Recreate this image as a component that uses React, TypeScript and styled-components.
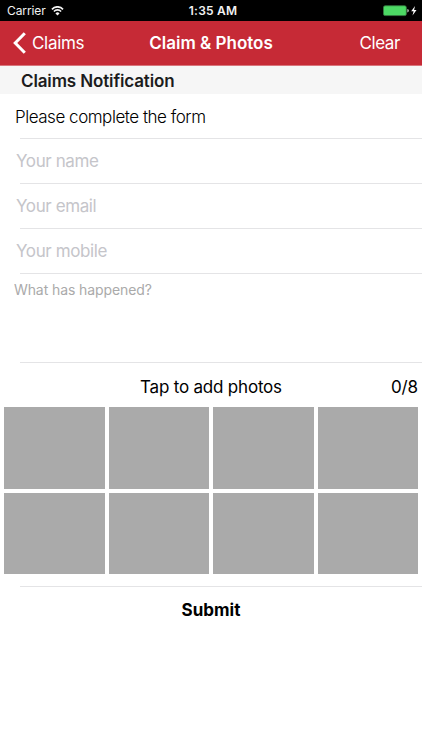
import React from "react";
import styled, { createGlobalStyle } from "styled-components";

const GlobalStyle = createGlobalStyle`
  * { box-sizing: border-box; }
  body { margin: 0; background: #fff; }
  button, input, textarea { font: inherit; color: inherit; border: 0; padding: 0; margin: 0; background: none; outline: none; border-radius: 0; }
`;

const Screen = styled.div`
  width: 422px;
  height: 750px;
  overflow: hidden;
  display: flex;
  flex-direction: column;
  background: #fff;
  color: #000;
  font-family: Inter, "Liberation Sans", sans-serif;
  font-size: 17px;
`;

const StatusBar = styled.div`
  height: 21px;
  flex: none;
  display: grid;
  grid-template-columns: 1fr auto 1fr;
  align-items: center;
  padding: 1px 4px 0 7px;
  background: #000;
  color: #f2f2f2;
  font-size: 12px;
  line-height: 20px;
`;

const Carrier = styled.div`
  display: flex;
  align-items: center;
  gap: 5px;
  letter-spacing: -0.1px;
`;

const Clock = styled.div`
  font-weight: 600;
  letter-spacing: 0.2px;
  padding-left: 1px;
`;

const Power = styled.div`
  display: flex;
  align-items: center;
  justify-content: flex-end;
`;

const NavBar = styled.header`
  height: 45px;
  flex: none;
  display: grid;
  grid-template-columns: 1fr auto 1fr;
  align-items: center;
  padding: 0 22px 0 13px;
  background: #c62a36;
  border-bottom: 1px solid #d9757c;
  color: #fff;
  line-height: 44px;
`;

const BackButton = styled.button`
  display: flex;
  align-items: center;
  gap: 6px;
  letter-spacing: -0.3px;
`;

const NavTitle = styled.h1`
  margin: 0;
  padding-left: 9px;
  font-size: 17px;
  font-weight: 600;
  letter-spacing: 0;
`;

const ClearButton = styled.button`
  justify-self: end;
  letter-spacing: -0.4px;
`;

const SectionHeader = styled.h2`
  height: 28px;
  flex: none;
  margin: 0;
  padding-left: 21px;
  background: #f6f6f6;
  color: #1c1c1c;
  font-size: 17px;
  font-weight: 600;
  line-height: 30px;
  letter-spacing: -0.13px;
`;

const Row = styled.div<{ $height: number }>`
  height: ${(p) => p.$height}px;
  flex: none;
  padding-left: 16px;
  background: linear-gradient(#e4e4e6, #e4e4e6) 20px 100% / 100% 1px no-repeat;
`;

const Instruction = styled.p`
  margin: 0 0 0 -1px;
  line-height: 46px;
  font-weight: 300;
  letter-spacing: -0.47px;
`;

const Field = styled.input`
  display: block;
  width: 100%;
  height: 44px;
  letter-spacing: -0.4px;
  &::placeholder { color: #c5c5ca; opacity: 1; }
`;

const Description = styled.textarea`
  display: block;
  width: 100%;
  height: 80px;
  margin: 7px 0 0 -2px;
  resize: none;
  font-size: 14px;
  line-height: 18px;
  letter-spacing: -0.1px;
  &::placeholder { color: #aaa; opacity: 1; }
`;

const PhotoSection = styled(Row)`
  padding: 0 4px;
`;

const PhotoCaption = styled.div`
  height: 44px;
  display: grid;
  grid-template-columns: 1fr auto 1fr;
  line-height: 48px;
`;

const CaptionText = styled.span`
  grid-column: 2;
  letter-spacing: -0.2px;
`;

const Counter = styled.span`
  justify-self: end;
  letter-spacing: -0.1px;
`;

const PhotoGrid = styled.div`
  display: grid;
  grid-template-columns: repeat(4, 1fr);
  grid-auto-rows: 81.5px;
  gap: 4px;
`;

const PhotoSlot = styled.button`
  background: #aaa;
`;

const SubmitButton = styled.button`
  height: 45px;
  flex: none;
  font-weight: 700;
  line-height: 46px;
`;

const WifiIcon = () => (
  <svg width="13" height="10" viewBox="0 0 14 10" preserveAspectRatio="none" fill="none" stroke="#f4f4f4" strokeWidth="1.7">
    <path d="M1 3.3a8.5 8.5 0 0 1 12 0M3.1 5.5a5.5 5.5 0 0 1 7.8 0" />
    <path d="M7 9.6 4.8 7.4a3.1 3.1 0 0 1 4.4 0Z" fill="#f4f4f4" stroke="none" />
  </svg>
);

const BatteryIcon = () => (
  <svg width="35" height="12" viewBox="0 0 35 12">
    <rect x="0.5" y="0.8" width="22.8" height="9.8" rx="1.6" fill="#4cd964" stroke="#387d43" strokeWidth="0.8" />
    <path d="M24.4 4q1.4.3 1.4 1.7t-1.4 1.7z" fill="#cfd8d0" />
    <path d="M32 1 28.2 6.3h2.4L29.5 10.4l4-5.4h-2.4z" fill="#fff" />
  </svg>
);

const BackIcon = () => (
  <svg width="13" height="22" viewBox="0 0 13 22" fill="none" stroke="#fff" strokeWidth="3">
    <path d="M11.8 1.2 2.2 11l9.6 9.8" />
  </svg>
);

const fields = ["Your name", "Your email", "Your mobile"];

export default function App() {
  return (
    <Screen>
      <GlobalStyle />
      <StatusBar>
        <Carrier>
          Carrier
          <WifiIcon />
        </Carrier>
        <Clock>1:35 AM</Clock>
        <Power>
          <BatteryIcon />
        </Power>
      </StatusBar>
      <NavBar>
        <BackButton>
          <BackIcon />
          Claims
        </BackButton>
        <NavTitle>Claim &amp; Photos</NavTitle>
        <ClearButton>Clear</ClearButton>
      </NavBar>
      <SectionHeader>Claims Notification</SectionHeader>
      <Row $height={45}>
        <Instruction>Please complete the form</Instruction>
      </Row>
      {fields.map((label) => (
        <Row key={label} $height={45}>
          <Field placeholder={label} />
        </Row>
      ))}
      <Row $height={89}>
        <Description placeholder="What has happened?" />
      </Row>
      <PhotoSection $height={224}>
        <PhotoCaption>
          <CaptionText>Tap to add photos</CaptionText>
          <Counter>0/8</Counter>
        </PhotoCaption>
        <PhotoGrid>
          {Array.from({ length: 8 }, (_, i) => (
            <PhotoSlot key={i} aria-label={`Add photo ${i + 1}`} />
          ))}
        </PhotoGrid>
      </PhotoSection>
      <SubmitButton>Submit</SubmitButton>
    </Screen>
  );
}
